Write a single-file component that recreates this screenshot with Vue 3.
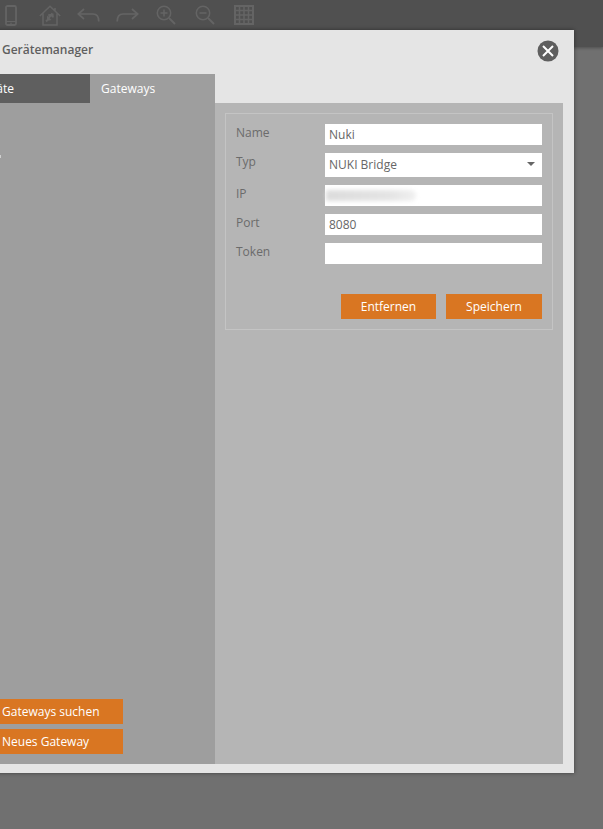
<template>
  <div class="page">
    <div class="toolbar">
      <div class="tool">
        <svg width="12" height="21" viewBox="0 0 12 21" fill="none" stroke="#646464" stroke-width="1.800">
          <rect x="1" y="1" width="10" height="19" rx="1.500" />
          <path d="M1 16.500h10" stroke-width="1" />
          <circle cx="6" cy="18.300" r=".8" fill="#646464" stroke="none" />
        </svg>
      </div>
      <div class="tool">
        <svg width="22" height="21" viewBox="0 0 22 21" fill="none" stroke="#646464" stroke-width="1.500">
          <path d="M.8 11 11 1.200 21.200 11M4 8.500V20h14V8.500M16 3v3.500" />
          <path d="M7 16.500l1.500-1.500M13.500 8.500 9.500 13M9.300 9.800l3.600 0.900M13.500 8.500l.4 4" stroke-width="2" />
          <path d="M8 10.500l4.500 4.500-4.500 1z" fill="#646464" stroke="none" />
        </svg>
      </div>
      <div class="tool">
        <svg width="23" height="14" viewBox="0 0 23 14" fill="none" stroke="#646464" stroke-width="1.700">
          <path d="M7 1 1.300 6 7 11M1.300 6H16c3.500 0 5.800 2.200 5.800 7.500" />
        </svg>
      </div>
      <div class="tool">
        <svg width="23" height="14" viewBox="0 0 23 14" fill="none" stroke="#646464" stroke-width="1.700">
          <path d="M16 1l5.700 5-5.700 5M21.700 6H7C3.500 6 1.200 8.200 1.200 13.500" />
        </svg>
      </div>
      <div class="tool">
        <svg width="20" height="20" viewBox="0 0 20 20" fill="none" stroke="#646464" stroke-width="1.500">
          <circle cx="8" cy="8" r="6.700" />
          <path d="M8 4.500v7M4.500 8h7" />
          <path d="M13 13l6 6" stroke-width="2" />
        </svg>
      </div>
      <div class="tool">
        <svg width="20" height="20" viewBox="0 0 20 20" fill="none" stroke="#646464" stroke-width="1.500">
          <circle cx="8" cy="8" r="6.700" />
          <path d="M4.500 8h7" />
          <path d="M13 13l6 6" stroke-width="2" />
        </svg>
      </div>
      <div class="tool">
        <svg width="20" height="20" viewBox="0 0 20 20" fill="none" stroke="#646464" stroke-width="2">
          <rect x="1" y="1" width="18" height="18" />
          <path d="M5.500 1v18M10 1v18M14.500 1v18M1 5.500h18M1 10h18M1 14.500h18" stroke-width="1.500" />
        </svg>
      </div>
    </div>

    <div class="modal">
      <div class="modal-head">
        <span class="modal-title">Gerätemanager</span>
        <button class="close">
          <svg viewBox="0 0 22 22" width="22" height="22">
            <circle cx="11" cy="11" r="10.500" fill="#5f5f5f" />
            <path d="M6 6l10 10M16 6 6 16" stroke="#fff" stroke-width="2" />
          </svg>
        </button>
      </div>

      <div class="modal-body">
        <div class="side">
          <div class="tabs">
            <div class="tab">Geräte</div>
            <div class="tab active">Gateways</div>
          </div>
          <div class="side-list">
            <div class="side-mark"></div>
            <button class="btn side-btn">Gateways suchen</button>
            <button class="btn side-btn">Neues Gateway</button>
          </div>
        </div>

        <div class="detail">
          <div class="box">
            <div v-for="field in fields" :key="field.label" class="row" :class="{ tall: field.select }">
              <span class="label">{{ field.label }}</span>
              <div class="input">
                {{ field.value }}
                <span v-if="field.blur" class="blur"></span>
                <span v-if="field.select" class="caret"></span>
              </div>
            </div>
            <div class="actions">
              <button class="btn remove">Entfernen</button>
              <button class="btn save">Speichern</button>
            </div>
          </div>
        </div>
      </div>
    </div>
  </div>
</template>

<script setup>
const fields = [
  { label: 'Name', value: 'Nuki' },
  { label: 'Typ', value: 'NUKI Bridge', select: true },
  { label: 'IP', value: '', blur: true },
  { label: 'Port', value: '8080' },
  { label: 'Token', value: '' },
];
</script>

<style>
html, body {
  margin: 0;
  background: #707070;
}
</style>

<style scoped>
.page {
  position: relative;
  width: 603px;
  height: 829px;
  overflow: hidden;
  background: #707070;
  font-family: "Open Sans", sans-serif;
}

.toolbar {
  display: flex;
  height: 47px;
  margin-left: -8px;
  background: #505050;
  box-shadow: 0 1px 3px rgba(0, 0, 0, 0.3);
}

.tool {
  width: 38.75px;
  height: 30px;
  display: flex;
  justify-content: center;
  align-items: center;
  flex: none;
}

.modal {
  position: absolute;
  top: 30px;
  left: -40px;
  width: 614px;
  height: 743px;
  display: flex;
  flex-direction: column;
  background: #e5e5e5;
  box-shadow: 0 0 4px rgba(0, 0, 0, 0.45);
}

.modal-head {
  display: flex;
  justify-content: space-between;
  align-items: center;
  height: 41px;
  margin-bottom: 3px;
  padding: 0 15px 0 42px;
  flex: none;
}

.modal-title {
  margin-top: -3px;
  font-size: 12px;
  font-weight: 600;
  color: #5f5f5f;
}

.close {
  display: block;
  width: 22px;
  height: 22px;
  padding: 0;
  border: 0;
  background: none;
}

.modal-body {
  display: flex;
  flex: 1;
  margin: 0 11px 9px 0;
}

.side {
  width: 255px;
  display: flex;
  flex-direction: column;
}

.tabs {
  display: flex;
  height: 29px;
  flex: none;
}

.tab {
  width: 114px;
  padding-left: 16px;
  line-height: 29px;
  font-size: 12px;
  color: #fff;
  background: #5f5f5f;
}

.tab.active {
  width: 114px;
  padding-left: 11px;
  background: #9e9e9e;
}

.side-list {
  flex: 1;
  display: flex;
  flex-direction: column;
  gap: 5px;
  padding-bottom: 10px;
  background: #9e9e9e;
}

.side-mark {
  width: 2px;
  height: 3px;
  margin: 52px 0 auto 39px;
  background: #cfcfcf;
}

.detail {
  flex: 1;
  margin-top: 29px;
  padding: 10px;
  background: #b5b5b5;
}

.box {
  height: 217px;
  box-sizing: border-box;
  padding: 10px 10px 0;
  border: 1px solid #c4c4c4;
}

.row {
  display: flex;
  height: 21px;
  margin-bottom: 8px;
}

.row.tall {
  height: 24px;
}

.label {
  width: 89px;
  font-size: 12px;
  line-height: 18px;
  color: #6b6b6b;
}

.input {
  position: relative;
  flex: 1;
  padding-left: 4px;
  font-size: 12px;
  line-height: 21px;
  color: #666;
  background: #fff;
}

.tall .input {
  line-height: 24px;
}

.caret {
  position: absolute;
  top: 9px;
  right: 7px;
  border: 4px solid transparent;
  border-top: 4px solid #666;
  border-bottom: 0;
}

.blur {
  position: absolute;
  top: 5px;
  left: 1px;
  width: 90px;
  height: 11px;
  border-radius: 2px 6px 6px 2px;
  background: linear-gradient(90deg, #dcdcdc, #e4e4e4 70%, #f0f0f0);
  filter: blur(2px);
}

.actions {
  display: flex;
  justify-content: flex-end;
  gap: 10px;
  margin-top: 30px;
}

.btn {
  height: 25px;
  padding: 0;
  border: 0;
  font-family: "Open Sans", sans-serif;
  font-size: 12px;
  font-weight: 400;
  color: #fff;
  background: #d97622;
}

.remove {
  width: 95px;
}

.save {
  width: 96px;
}

.side-btn {
  width: 163px;
  padding-left: 42px;
  text-align: left;
  flex: none;
}
</style>
